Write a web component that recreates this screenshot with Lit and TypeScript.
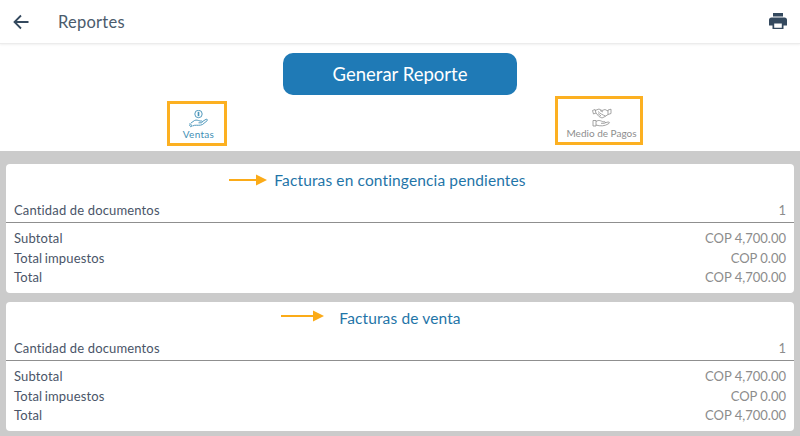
import { LitElement, html, css } from "lit";
import { customElement } from "lit/decorators.js";

const arrow = (left: number, top: number, w: number) => html`<svg class="arrow" style="left:${left}px;top:${top}px" width="${w}" height="12" viewBox="0 0 ${w} 12"><path d="M0 6H${w - 10}" stroke="#fbab18" stroke-width="2"/><path d="M${w - 11} 0.5L${w} 6L${w - 11} 11.5Z" fill="#fbab18"/></svg>`;

@customElement("app-root")
export class AppRoot extends LitElement {
  static styles = css`
    :host { display: block; width: 800px; height: 436px; overflow: hidden; background: #cbcbcb; font-family: Lato, sans-serif; color: #4a5568; }
    .top { background: #fff; height: 151px; display: flex; flex-direction: column; }
    .bar { height: 44px; flex: none; display: flex; align-items: center; box-sizing: border-box; padding: 0 13px; border-bottom: 1px solid #ececec; box-shadow: 0 1px 2px rgba(0,0,0,.06); color: #34495e; }
    .bar svg { display: block; }
    .title { font-size: 16.5px; margin-left: 29px; flex: 1; letter-spacing: .25px; color: #4b5b6c; }
    .btn { align-self: center; margin-top: 9px; width: 234px; height: 42px; flex: none; border-radius: 10px; background: #1f7ab6; color: #fff; font-size: 18.5px; display: flex; align-items: center; justify-content: center; }
    .tabs { display: flex; align-items: flex-end; padding-left: 167px; gap: 328px; height: 56px; flex: none; }
    .tab { box-sizing: border-box; border: 3px solid #fcb021; display: flex; flex-direction: column; align-items: center; justify-content: flex-end; font-size: 10px; padding-bottom: 3px; }
    .t1 { width: 60px; height: 45px; color: #3f8fb5; margin-bottom: 5px; padding-left: 3px; letter-spacing: .3px; }
    .t2 { width: 88px; height: 49px; color: #8e8e8e; margin-bottom: 6px; padding-left: 5px; }
    .cards { padding: 13px 6px 0; display: flex; flex-direction: column; gap: 9px; }
    .card { position: relative; height: 129px; background: #fff; border-radius: 4px; font-size: 13px; letter-spacing: .15px; }
    .arrow { position: absolute; }
    h2 { margin: 0 0 1px; height: 33px; font-size: 15.5px; font-weight: 400; color: #1f75a8; text-align: center; line-height: 33px; letter-spacing: .13px; }
    .row { display: flex; justify-content: space-between; padding: 0 8px; height: 19.5px; line-height: 19.5px; word-spacing: -1px; }
    .row span:last-child { color: #8c8c8c; letter-spacing: 0; word-spacing: 0; }
    .count { height: 24px; line-height: 24px; border-bottom: 1px solid #8f8f8f; margin-bottom: 6px; word-spacing: 0; }
  `;
  render() {
    const card = (title: string, left: number, top: number, w: number) => html`<div class="card">${arrow(left, top, w)}<h2>${title}</h2>
      <div class="row count"><span>Cantidad de documentos</span><span>1</span></div>
      <div class="row"><span>Subtotal</span><span>COP 4,700.00</span></div>
      <div class="row"><span>Total impuestos</span><span>COP 0.00</span></div>
      <div class="row"><span>Total</span><span>COP 4,700.00</span></div></div>`;
    return html`<div class="top">
      <div class="bar">
        <svg width="16" height="16" viewBox="0 0 16 16" fill="none" stroke="currentColor" stroke-width="1.8"><path d="M15.5 8H1.5M8 1.5L1.5 8L8 14.5"/></svg>
        <div class="title">Reportes</div>
        <svg width="18" height="17" viewBox="0 0 18 17" fill="currentColor"><path d="M4 0H14V3.5H4Z"/><path fill-rule="evenodd" d="M2.5 4.5H15.5A2.5 2.5 0 0 1 18 7V12.5H14.5V16H3.5V12.5H0V7A2.5 2.5 0 0 1 2.5 4.5ZM5.2 10.5V14.7H12.8V10.5Z"/></svg>
      </div>
      <div class="btn">Generar Reporte</div>
      <div class="tabs">
        <div class="tab t1">
          <svg width="19" height="18" viewBox="0 0 19 18" fill="none" stroke="currentColor" stroke-width=".9"><circle cx="9.500" cy="4" r="3.700"/><path d="M9.500 1.800V6.200M8.300 3H10.700M8.300 5H10.700"/><path d="M1 13.500L3 15.800L1.800 16.800L0 14.500ZM2 13L5.500 10.500C7.500 9.500 9 10.500 11 11H13C14 11.500 13.500 12.800 12 12.800H9.500M13.500 11.500L17 9.300C18.500 9 18.800 10 18 10.800L13.500 14.500C11 15.800 8 15 5.500 15.300L3.500 16"/></svg>
          <span>Ventas</span>
        </div>
        <div class="tab t2">
          <svg width="20" height="19" viewBox="0 0 20 19" fill="none" stroke="currentColor" stroke-width=".8"><path d="M0.500 2.500L3 1.500L4 5L1.500 6ZM3 2.500L7 1L10 2.500L13 1.500L16 3M4 5L7 8.500L10 10L13 8.500L16 6.500M16 2L19 1.200V5.500L16 6.500Z"/><path d="M6 3.500C8 5.500 11 7 13.500 8M6 5.500L9 8M8 2.500L11 4"/><path d="M1 12.500H4V18H1ZM4 13.500C7 11.500 9 13 11 13.800H13C14 14.500 13 15.300 12 15.300H9M13 14.800L16 14C18 14 18 15 16 16C13 18 8 18.500 4 17"/></svg>
          <span>Medio de Pagos</span>
        </div>
      </div>
    </div>
    <div class="cards">
      ${card("Facturas en contingencia pendientes", 223, 10, 38)}
      ${card("Facturas de venta", 275, 8, 43)}
    </div>`;
  }
}
